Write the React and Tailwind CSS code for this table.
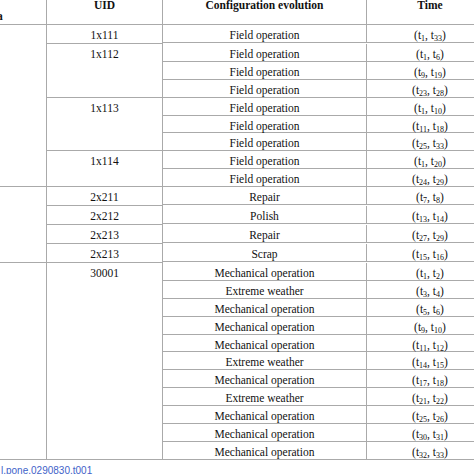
import React from 'react';

const MECH = 'Mechanical operation';
const XW = 'Extreme weather';
const FIELD = 'Field operation';

const groups = [
  [
    { uid: '1x111', rows: [[FIELD, '1', '33']] },
    { uid: '1x112', rows: [[FIELD, '1', '6'], [FIELD, '9', '19'], [FIELD, '23', '28']] },
    { uid: '1x113', rows: [[FIELD, '1', '10'], [FIELD, '11', '18'], [FIELD, '25', '33']] },
    { uid: '1x114', rows: [[FIELD, '1', '20'], [FIELD, '24', '29']] },
  ],
  [
    { uid: '2x211', rows: [['Repair', '7', '8']] },
    { uid: '2x212', rows: [['Polish', '13', '14']] },
    { uid: '2x213', rows: [['Repair', '27', '29']] },
    { uid: '2x213', rows: [['Scrap', '15', '16']] },
  ],
  [
    {
      uid: '30001',
      rows: [
        [MECH, '1', '2'],
        [XW, '3', '4'],
        [MECH, '5', '6'],
        [MECH, '9', '10'],
        [MECH, '11', '12'],
        [XW, '14', '15'],
        [MECH, '17', '18'],
        [XW, '21', '22'],
        [MECH, '25', '26'],
        [MECH, '30', '31'],
        [MECH, '32', '33'],
      ],
    },
  ],
];

const Row = ({ evo, a, b }) => (
  <div className="flex h-[17.875px] border-b border-[#aaaaaa]">
    <div className="w-[204px] shrink-0 border-r border-[#aaaaaa] text-center pt-[3px] leading-[15px]">{evo}</div>
    <div className="w-[126px] shrink-0 text-center pt-[3px] leading-[15px]">
      (t<sub className="text-[8px]">{a}</sub>, t<sub className="text-[8px]">{b}</sub>)
    </div>
  </div>
);

const App = () => {
  return (
    <div
      className="w-[474px] h-[474px] overflow-hidden bg-white text-[11.5px] text-[#111111]"
      style={{ fontFamily: '"Liberation Serif", "Times New Roman", serif' }}
    >
      <div className="w-[493px]">
        {/* Header */}
        <div className="flex h-[25px] border-b border-[#aaaaaa] font-bold leading-none">
          <div className="w-[47px] shrink-0 border-r border-[#aaaaaa] flex items-end pb-[2px]">
            <span className="-ml-[3px]">a</span>
          </div>
          <div className="w-[116px] shrink-0 border-r border-[#aaaaaa] text-center">UID</div>
          <div className="w-[204px] shrink-0 border-r border-[#aaaaaa] text-center">Configuration evolution</div>
          <div className="w-[126px] shrink-0 text-center">Time</div>
        </div>

        {/* Body */}
        {groups.map((subs, gi) => (
          <div key={gi} className="flex">
            <div className="w-[47px] shrink-0 border-r border-b border-[#aaaaaa]" />
            <div className="flex flex-col">
              {subs.map((s, si) => (
                <div key={si} className="flex">
                  <div className="w-[116px] shrink-0 border-r border-b border-[#aaaaaa] text-center pt-[3px] leading-[15px]">
                    {s.uid}
                  </div>
                  <div className="flex flex-col">
                    {s.rows.map((r, ri) => (
                      <Row key={ri} evo={r[0]} a={r[1]} b={r[2]} />
                    ))}
                  </div>
                </div>
              ))}
            </div>
          </div>
        ))}
      </div>

      {/* Footer link */}
      <div
        className="w-fit ml-[1px] mt-[5px] text-[10px] leading-[11px] text-[#4262c9]"
        style={{ fontFamily: '"Liberation Sans", Arial, sans-serif' }}
      >
        l.pone.0290830.t001
      </div>
    </div>
  );
};

export default App;
